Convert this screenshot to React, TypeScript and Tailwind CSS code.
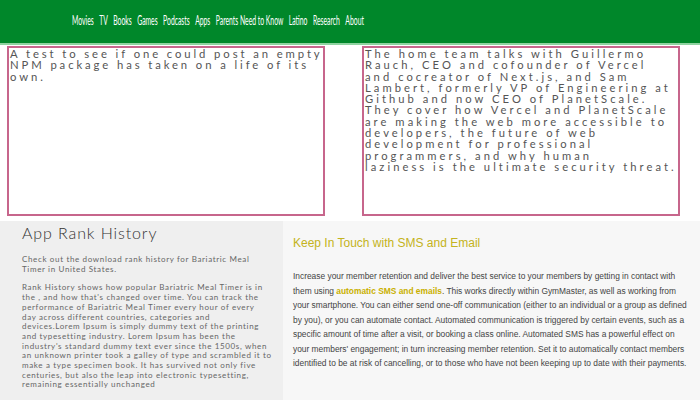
const navItems = ["Movies", "TV", "Books", "Games", "Podcasts", "Apps", "Parents Need to Know", "Latino", "Research", "About"];

const lato = { fontFamily: "Lato, 'Open Sans', sans-serif" };

const rankLines = [
  "Rank History shows how popular Bariatric Meal Timer is in",
  "the , and how that's changed over time. You can track the",
  "performance of Bariatric Meal Timer every hour of every",
  "day across different countries, categories and",
  "devices.Lorem Ipsum is simply dummy text of the printing",
  "and typesetting industry. Lorem Ipsum has been the",
  "industry's standard dummy text ever since the 1500s, when",
  "an unknown printer took a galley of type and scrambled it to",
  "make a type specimen book. It has survived not only five",
  "centuries, but also the leap into electronic typesetting,",
  "remaining essentially unchanged",
];

const podcastLines = [
  "The home team talks with Guillermo",
  "Rauch, CEO and cofounder of Vercel",
  "and cocreator of Next.js, and Sam",
  "Lambert, formerly VP of Engineering at",
  "Github and now CEO of PlanetScale.",
  "They cover how Vercel and PlanetScale",
  "are making the web more accessible to",
  "developers, the future of web",
  "development for professional",
  "programmers, and why human",
  "laziness is the ultimate security threat.",
];

const smsLines = [
  "your smartphone. You can either send one-off communication (either to an individual or a group as defined",
  "by you), or you can automate contact. Automated communication is triggered by certain events, such as a",
  "specific amount of time after a visit, or booking a class online. Automated SMS has a powerful effect on",
  "your members' engagement; in turn increasing member retention. Set it to automatically contact members",
  "identified to be at risk of cancelling, or to those who have not been keeping up to date with their payments.",
];

export default function App() {
  return (
    <div className="w-[700px] h-[400px] overflow-hidden bg-white">
      {/* Top nav */}
      <header className="h-[45px] bg-[#00872a] border-b-2 border-[#8fd3a0] flex items-center pl-[72px]">
        <nav
          className="flex gap-[10px] text-white text-[12.5px] origin-left scale-x-[0.545] whitespace-nowrap -mt-[1px]"
          style={{ fontFamily: "Lato, sans-serif" }}
        >
          {navItems.map((n) => (
            <a key={n} href="#">
              {n}
            </a>
          ))}
        </nav>
      </header>

      {/* Cards */}
      <div className="flex pl-[7px] pt-[1px] gap-[37px]">
        <div
          className="w-[318px] h-[170px] border-2 border-[#c7668c] px-[1px] text-[11.3px] leading-[11.4px] tracking-[2.9px] text-[#555] whitespace-nowrap overflow-hidden"
          style={lato}
        >
          <div>A test to see if one could post an empty</div>
          <div>NPM package has taken on a life of its</div>
          <div>own.</div>
        </div>
        <div
          className="w-[318px] h-[170px] border-2 border-[#c7668c] px-[1px] text-[11.2px] leading-[11.3px] tracking-[3.05px] text-[#555] whitespace-nowrap overflow-hidden"
          style={lato}
        >
          {podcastLines.map((l) => (
            <div key={l}>{l}</div>
          ))}
        </div>
      </div>

      {/* Bottom panels */}
      <div className="flex mt-[5px] h-[180px]">
        <section className="w-[283px] bg-[#efefef] pl-[22px] pr-[8px] pt-[2px] whitespace-nowrap" style={lato}>
          <h2 className="text-[16px] font-light tracking-[0.9px] text-[#333] leading-[20px]">App Rank History</h2>
          <p className="mt-[12px] text-[8px] leading-[9.7px] tracking-[0.65px] text-[#666]">
            Check out the download rank history for Bariatric Meal
            <br />
            Timer in United States.
          </p>
          <div className="mt-[9px] text-[8px] leading-[9.7px] tracking-[0.65px] text-[#666]">
            {rankLines.map((l) => (
              <div key={l}>{l}</div>
            ))}
          </div>
        </section>
        <section
          className="flex-1 bg-[#f7f7f7] pl-[10px] pr-[10px] pt-[14px] whitespace-nowrap"
          style={{ fontFamily: "'Liberation Sans', Arial, sans-serif" }}
        >
          <h2 className="text-[12px] leading-[16px] text-[#c4b320]">Keep In Touch with SMS and Email</h2>
          <div className="mt-[18px] text-[8.4px] leading-[14.5px] text-[#444]">
            <div>
              Increase your member retention and deliver the best service to your members by getting in contact with
            </div>
            <div className="flex">
              <span>them using&nbsp;</span>
              <span className="font-bold text-[#c9b000]">automatic SMS and emails</span>
              <span>. This works directly within GymMaster, as well as working from</span>
            </div>
            {smsLines.map((l) => (
              <div key={l}>{l}</div>
            ))}
          </div>
        </section>
      </div>
    </div>
  );
}
